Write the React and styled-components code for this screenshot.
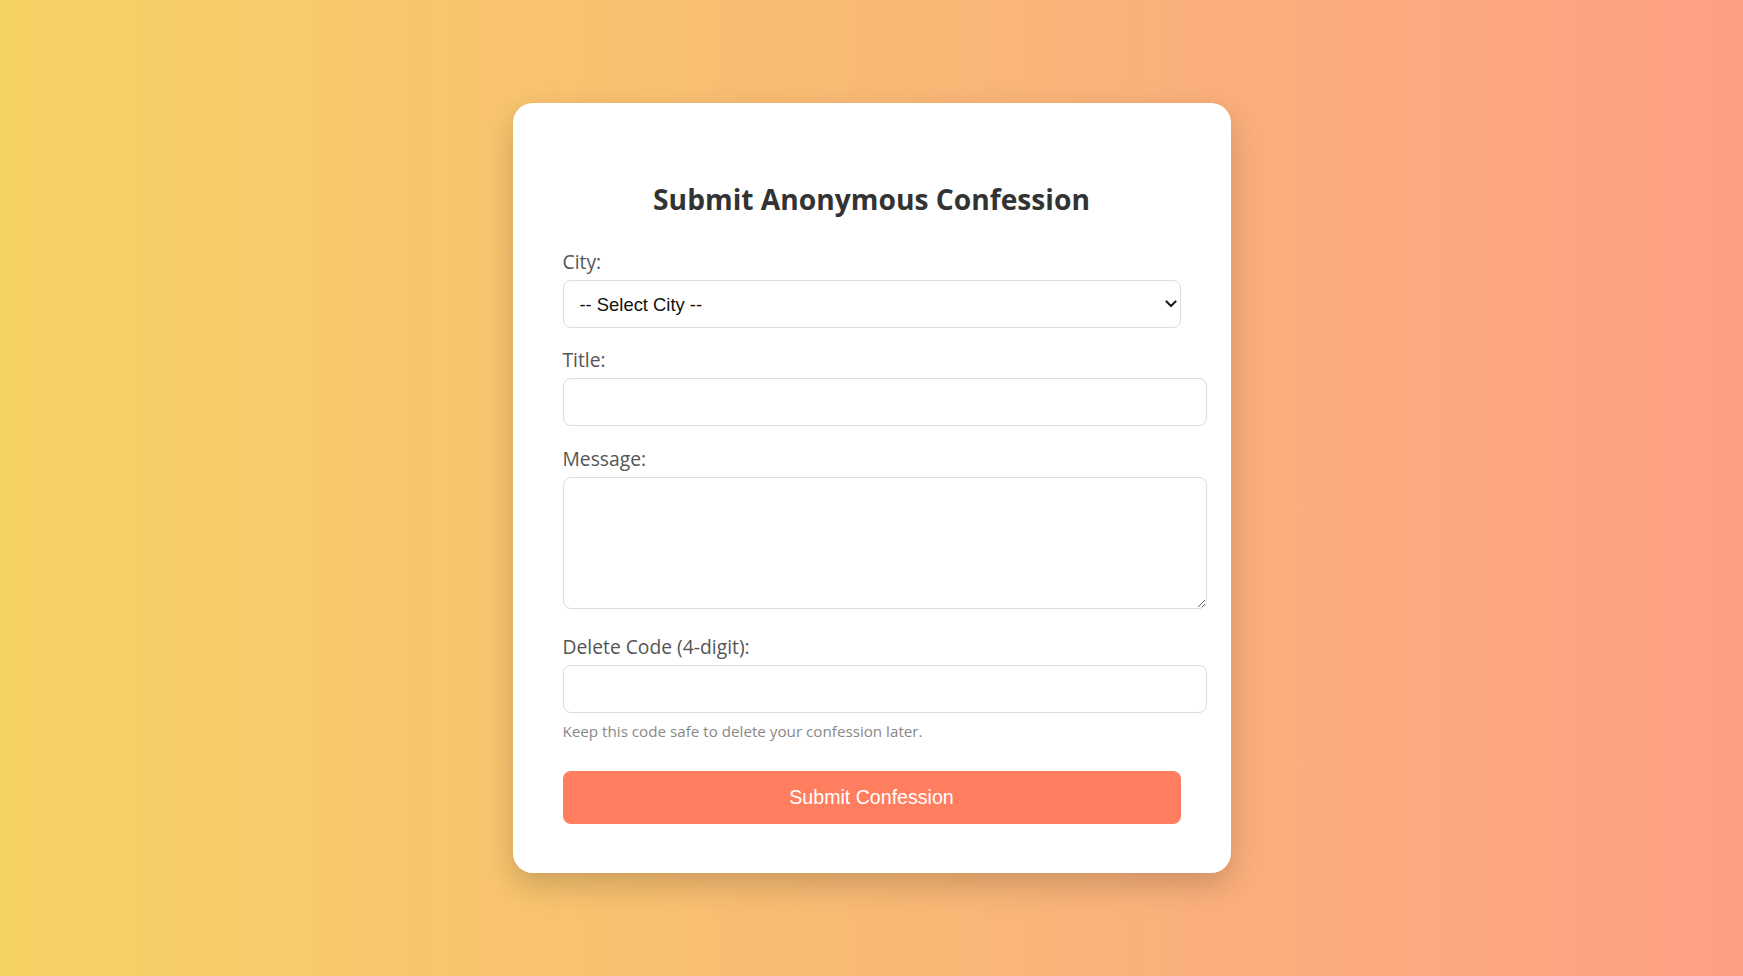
import React from "react";
import styled, { createGlobalStyle } from "styled-components";

const Global = createGlobalStyle`
  html, body { margin: 0; padding: 0; }
  body {
    font-family: "Open Sans", "Noto Sans", sans-serif;
    background: linear-gradient(to right, #f6d365 0%, #fda085 100%);
    min-height: 100vh;
  }
  * { box-sizing: content-box; }
`;

const Page = styled.div`
  min-height: 100vh;
  display: flex;
  align-items: center;
  justify-content: center;
`;

const Card = styled.form`
  width: 618px;
  padding: 50px 50px 49px;
  background: #ffffff;
  border-radius: 20px;
  box-shadow: 0 12px 30px rgba(0, 0, 0, 0.18);
`;

const Heading = styled.h2`
  margin: 29px 0 34px;
  font-family: "Open Sans", sans-serif;
  font-weight: 700;
  font-size: 28.2px;
  line-height: 34px;
  color: #333333;
  text-align: center;
`;

const Group = styled.div`
  margin-bottom: ${(p) => p.$mb || 0}px;
`;

const Label = styled.label`
  display: block;
  margin-bottom: 6px;
  font-size: 19.3px;
  line-height: 24px;
  color: #555555;
`;

const SelectWrap = styled.div`
  position: relative;
  width: 618px;
`;

const Select = styled.select`
  display: block;
  box-sizing: border-box;
  width: 100%;
  height: 48px;
  padding: 0 30px 0 16px;
  border: 1px solid #dddddd;
  border-radius: 8px;
  background: #ffffff;
  appearance: none;
  -webkit-appearance: none;
  font-family: "Liberation Sans", Arial, sans-serif;
  font-size: 18.4px;
  color: #111111;
  outline: none;
`;

const Chevron = styled.svg`
  position: absolute;
  right: 4px;
  top: 50%;
  width: 12px;
  height: 8px;
  margin-top: -4px;
  pointer-events: none;
`;

const Input = styled.input`
  display: block;
  width: 100%;
  height: 22px;
  padding: 12px;
  border: 1px solid #dddddd;
  border-radius: 8px;
  background: #ffffff;
  font-family: "Liberation Sans", Arial, sans-serif;
  font-size: 16px;
  outline: none;
`;

const TextArea = styled.textarea`
  display: block;
  width: 100%;
  height: 106px;
  padding: 12px;
  border: 1px solid #dddddd;
  border-radius: 8px;
  background: #ffffff;
  font-family: "Liberation Sans", Arial, sans-serif;
  font-size: 16px;
  resize: vertical;
  outline: none;
`;

const Hint = styled.p`
  margin: 8px 0 30px;
  font-size: 15.2px;
  line-height: 20px;
  color: #888888;
`;

const Button = styled.button`
  display: block;
  box-sizing: border-box;
  width: 100%;
  height: 53px;
  border: none;
  border-radius: 8px;
  background: #ff7e5f;
  color: #ffffff;
  font-family: "Liberation Sans", Arial, sans-serif;
  font-size: 19.6px;
  cursor: pointer;
`;

export default function App() {
  return (
    <>
      <Global />
      <Page>
        <Card onSubmit={(e) => e.preventDefault()}>
          <Heading>Submit Anonymous Confession</Heading>
          <Group $mb={20}>
            <Label htmlFor="city">City:</Label>
            <SelectWrap>
              <Select id="city" defaultValue="">
                <option value="">-- Select City --</option>
              </Select>
              <Chevron viewBox="0 0 12 8" aria-hidden="true">
                <path d="M1.5 1.5 L6 6 L10.5 1.5" fill="none" stroke="#222" strokeWidth="2.2" strokeLinecap="round" strokeLinejoin="round" />
              </Chevron>
            </SelectWrap>
          </Group>
          <Group $mb={21}>
            <Label htmlFor="title">Title:</Label>
            <Input id="title" type="text" />
          </Group>
          <Group $mb={26}>
            <Label htmlFor="message">Message:</Label>
            <TextArea id="message" />
          </Group>
          <Group>
            <Label htmlFor="code">Delete Code (4-digit):</Label>
            <Input id="code" type="text" maxLength={4} />
            <Hint>Keep this code safe to delete your confession later.</Hint>
          </Group>
          <Button type="submit">Submit Confession</Button>
        </Card>
      </Page>
    </>
  );
}
